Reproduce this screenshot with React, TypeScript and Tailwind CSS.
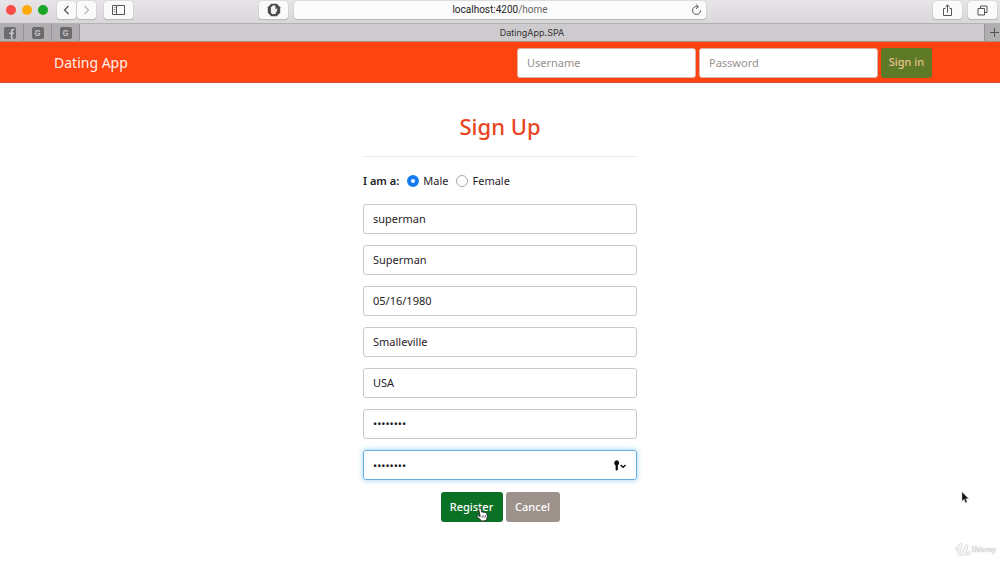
import type { ReactNode } from "react"

const fields = [
    { label: "Username", type: "text", value: "superman" },
    { label: "Known as", type: "text", value: "Superman" },
    { label: "Date of birth", type: "text", value: "05/16/1980" },
    { label: "City", type: "text", value: "Smalleville" },
    { label: "Country", type: "text", value: "USA" },
    { label: "Password", type: "password", value: "password" },
]

const ToolButton = ({ label, className, children } : { label: string, className: string, children: ReactNode }) => {
    return <button aria-label={label} className={`flex h-[18px] items-center justify-center rounded-[3px] bg-[#fbfafb] text-[#555] shadow-[0_0_1px_#999,0_1px_1px_#bbb] ${className}`}>
        {children}
    </button>
}

const Toolbar = () => {
    return <div className="flex h-[23px] items-start bg-linear-to-b from-[#e8e5e9] to-[#dad7db] pt-px pl-[6px] pr-[3px]">
        <div className="flex h-[18px] w-[51px] items-center gap-[6px]">
            <span className="size-[10px] rounded-full bg-[#fb4b46]" />
            <span className="size-[10px] rounded-full bg-[#fdaa0c]" />
            <span className="size-[10px] rounded-full bg-[#1ba725]" />
        </div>
        <div className="flex gap-px">
            <ToolButton label="Back" className="w-[19px]">
                <svg width="7" height="10" viewBox="0 0 7 10" fill="none" stroke="currentColor" strokeWidth="1.3"><path d="M5.5 1 1.5 5l4 4" /></svg>
            </ToolButton>
            <ToolButton label="Forward" className="w-[19px]">
                <svg width="7" height="10" viewBox="0 0 7 10" fill="none" stroke="#b5b3b6" strokeWidth="1.2"><path d="m1.5 1 4 4-4 4" /></svg>
            </ToolButton>
        </div>
        <ToolButton label="Sidebar" className="ml-2 w-[29px]">
            <svg width="13" height="10" viewBox="0 0 13 10" fill="none" stroke="currentColor">
                <path d="M.5.5h12v9H.5zM4.5.5v9" />
                <path d="M2 2.5h1.5M2 4.5h1.5M2 6.5h1.5" strokeWidth=".7" />
            </svg>
        </ToolButton>
        <div className="flex flex-1 justify-center gap-[6px] pl-8">
            <ToolButton label="Content blocker" className="w-[29px]">
                <svg width="14" height="14" viewBox="0 0 14 14">
                    <path d="M4.2.8h5.6l3.4 3.4v5.6l-3.4 3.4H4.2L.8 9.8V4.2z" fill="#4b4a4c" />
                    <path d="M3.9 7V4.1q.6-.6 1.1 0V3q.6-.6 1.1 0v-.7q.6-.6 1.2 0V3q.6-.6 1.2 0v3.6l1-1q1-.1.9.6L9 10q-.7 1.3-2.2 1.3-2.9 0-2.9-2.5z" fill="#f0eff0" />
                </svg>
            </ToolButton>
            <div className="relative h-[18px] w-[412px]">
                <div className="flex h-full items-center justify-center rounded-[3px] bg-[#fcfbfc] font-['Roboto',sans-serif] text-[10px] leading-[18px] text-[#222] shadow-[0_0_1px_#999,0_1px_1px_#bbb]">
                    localhost:4200<span className="text-[#666]">/home</span>
                </div>
                <button aria-label="Reload" className="absolute right-1 top-[3px] text-[#555]">
                    <svg width="11" height="12" viewBox="0 0 11 12" fill="none" stroke="currentColor">
                        <path d="M6.4 2.6A4 4 0 1 0 9.5 6.3" />
                        <path d="M5 .5 7.5 2.7 5 4.8" />
                    </svg>
                </button>
            </div>
        </div>
        <div className="ml-[133px] flex gap-[6px]">
            <ToolButton label="Share" className="w-[29px]">
                <svg width="11" height="13" viewBox="0 0 11 13" fill="none" stroke="currentColor">
                    <path d="M3.5 4.5h-2v7h8v-7h-2M5.5 8.5V1M3.3 3l2.2-2 2.2 2" />
                </svg>
            </ToolButton>
            <ToolButton label="Show tabs" className="w-[29px]">
                <svg width="11" height="11" viewBox="0 0 11 11" fill="none" stroke="currentColor">
                    <path d="M1 3.5h6.5V10H1zM3.5 3.5V1H10v6.5H7.5" />
                </svg>
            </ToolButton>
        </div>
    </div>
}

const PinnedTab = ({ label, className, children } : { label: string, className: string, children: ReactNode }) => {
    return <button aria-label={label} className={`flex items-center justify-center border-r border-[#959396] bg-[#b0aeb1] ${className}`}>
        {children}
    </button>
}

const GIcon = () => {
    return <span className="flex size-3 items-center justify-center rounded-[2px] bg-[#6c6a6d] font-['Inter',sans-serif] text-[8px] leading-3 font-bold text-[#c4c2c5]">G</span>
}

const TabBar = () => {
    return <div className="flex h-[19px] border-t border-b border-t-[#b3b1b4] border-b-[#a78d88] bg-[#cecbce]">
        <PinnedTab label="Facebook" className="w-6 pr-[3px]">
            <svg width="12" height="12" viewBox="0 0 12 12">
                <rect width="12" height="12" rx="2" fill="#6c6a6d" />
                <path d="M6.8 12V7.1H5.2V5.4h1.6V4.2C6.8 2.5 7.7 1.8 9 1.8h1.3v1.6h-.9c-.6 0-.8.3-.8.9v1.1h1.6L10 7.1H8.6V12z" fill="#c4c2c5" />
            </svg>
        </PinnedTab>
        <PinnedTab label="Google" className="w-7"><GIcon /></PinnedTab>
        <PinnedTab label="Google" className="w-7"><GIcon /></PinnedTab>
        <div className="flex flex-1 items-center justify-center font-['Inter',sans-serif] text-[9px] leading-[17px] text-[#333]">DatingApp.SPA</div>
        <button aria-label="New tab" className="flex w-4 items-center justify-end border-l border-[#959396] bg-[#b0aeb1] pr-px">
            <svg width="9" height="9" viewBox="0 0 9 9" stroke="#555"><path d="M4.5 0v9M0 4.5h9" /></svg>
        </button>
    </div>
}

const Nav = () => {
    return <nav className="flex h-[41px] items-center justify-between border-b border-[#c9512f] bg-[#ff4411] pt-px pl-[54px] pr-[68px]">
        <a href="#" className="text-sm text-[#fff0ea]">Dating App</a>
        <form className="flex gap-[3px]">
            <input aria-label="Username" placeholder="Username" className="h-[30px] w-[179px] rounded-[3px] border border-[#d9b5a9] bg-white px-[9px] text-[11px] placeholder:text-[#99908b]" />
            <input aria-label="Password" type="password" placeholder="Password" className="h-[30px] w-[179px] rounded-[3px] border border-[#d9b5a9] bg-white px-[9px] text-[11px] placeholder:text-[#99908b]" />
            <button type="button" className="h-[30px] w-[51px] rounded-[3px] bg-[#5f7a26] text-[11px] font-medium text-[#e5c28d]">Sign in</button>
        </form>
    </nav>
}

const Radio = ({ label, checked } : { label: string, checked?: boolean }) => {
    return <label className="flex items-center gap-1">
        <input type="radio" name="gender" defaultChecked={checked} className="size-3 appearance-none rounded-full border border-[#aaa] bg-white checked:border-4 checked:border-[#147bf0]" />
        {label}
    </label>
}

const HandCursor = () => {
    return <svg className="absolute left-[35px] top-[15px]" width="13" height="15" viewBox="0 0 13 15">
        <path d="M3.2 1.2c.8-.7 1.7-.2 1.9.7l.8 3.3c.6-.5 1.3-.3 1.7.2.6-.4 1.3-.2 1.6.4.8-.3 1.5.1 1.7.9l.6 3.1-.9 1.9.2 1.7-5.4.8-.6-1.3-3.2-2.6c-1.2-1 .1-2.2 1.3-1.5l1.3.8L2.7 2.4q-.1-.7.5-1.2z" fill="#fff" stroke="#222" strokeWidth=".9" />
        <path d="m6 8.7.4 2.3M7.7 8.4l.4 2.3M9.3 8.1l.4 2.3" stroke="#444" strokeWidth=".7" />
    </svg>
}

const SignUp = () => {
    return <form className="mx-auto w-[274px] pt-[27px] text-[#1f2226]">
        <h1 className="text-center text-[22px] leading-8 font-medium text-[#e8451f]">Sign Up</h1>
        <hr className="mt-[14px] border-[#e9e9e9]" />
        <div className="mt-4 flex h-4 items-center gap-2 text-[11px]">
            <span className="font-semibold">I am a:</span>
            <Radio label="Male" checked />
            <Radio label="Female" />
        </div>
        <div className="mt-[15px] flex flex-col gap-[11px]">
            {fields.map((f) => <input key={f.label} aria-label={f.label} type={f.type} defaultValue={f.value} className="h-[30px] w-full rounded-[3px] border border-[#c9c9c9] px-[9px] pb-[2px] text-[11px]" />)}
            <div className="relative">
                <input aria-label="Confirm password" type="password" defaultValue="password" className="block h-[30px] w-full rounded-[3px] border border-[#64ade0] px-[9px] text-[11px] shadow-[0_0_5px_1px_#b5dcf8]" />
                <svg className="absolute right-[10px] top-[10px]" width="14" height="11" viewBox="0 0 14 11">
                    <path d="M3.5.2a2.7 2.7 0 0 1 1.4 5v4.6l-1 .9-1.3-.7V5.4A2.8 2.8 0 0 1 3.5.2z" fill="#111" />
                    <path d="m7.7 5 2.4 2.3L12.5 5" fill="none" stroke="#111" strokeWidth="1.5" />
                </svg>
            </div>
        </div>
        <div className="mt-3 flex justify-center gap-[3px] text-[11px] font-medium text-white">
            <button type="button" className="relative h-[30px] w-[62px] rounded-[3px] bg-[#0b7125]">
                Register
                <HandCursor />
            </button>
            <button type="button" className="h-[30px] w-[54px] rounded-[3px] bg-[#9c918b]">Cancel</button>
        </div>
    </form>
}

const Watermark = () => {
    return <div className="fixed bottom-1 right-1 flex items-center gap-px">
        <svg width="16" height="14" viewBox="0 0 16 14" fill="none" strokeLinejoin="round" strokeLinecap="round">
            <path d="M1.5 6C3 4.5 4 3 6 1.8L3.8 8.8c-.7 3.6 2.6 3.8 4.4 1L11.8 3 10 9.5c-.5 2.7 2.4 2.4 4.3.4" stroke="#d2d2d2" strokeWidth="3" />
            <path d="M1.5 6C3 4.5 4 3 6 1.8L3.8 8.8c-.7 3.6 2.6 3.8 4.4 1L11.8 3 10 9.5c-.5 2.7 2.4 2.4 4.3.4" stroke="#f4f4f4" strokeWidth="1.9" />
        </svg>
        <span className="font-['Inter',sans-serif] text-[7px] leading-3 font-bold text-[#e8e8e8] [text-shadow:0_0_1px_#999]">Udemy</span>
    </div>
}

export default function App() {
    return <div className="min-h-screen bg-white font-['Noto_Sans',sans-serif]">
        <Toolbar />
        <TabBar />
        <Nav />
        <SignUp />
        <svg className="fixed left-[961px] top-[491px]" width="9" height="13" viewBox="0 0 9 13">
            <path d="M1 .8v9.4l2.1-1.9 1.4 3.5 1.6-.7-1.4-3.3h2.9z" fill="#111" stroke="#bbb" strokeWidth=".6" />
        </svg>
        <Watermark />
    </div>
}
